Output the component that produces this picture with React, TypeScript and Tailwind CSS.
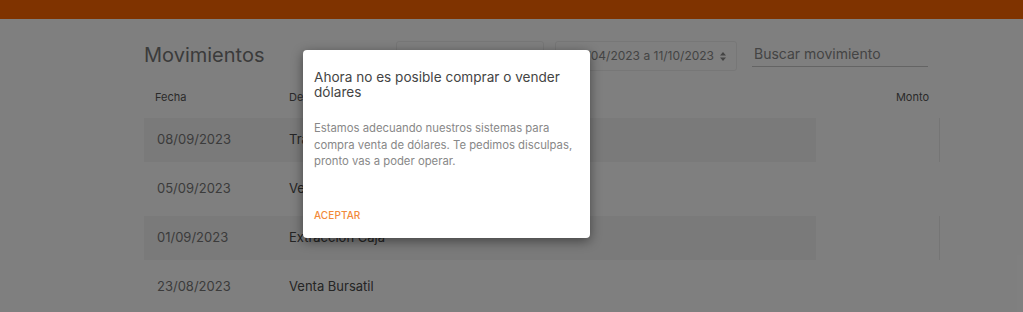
const rows = [
  { date: '08/09/2023', desc: 'Transferencia', striped: true },
  { date: '05/09/2023', desc: 'Venta Bursatil', striped: false },
  { date: '01/09/2023', desc: 'Extracción Caja', striped: true },
  { date: '23/08/2023', desc: 'Venta Bursatil', striped: false },
]

function UpDownIcon() {
  return (
    <svg className="h-[9px] w-[6px]" viewBox="0 0 6 9" fill="currentColor">
      <path d="M3 0L6 3.5H0z" />
      <path d="M3 9L0 5.5h6z" />
    </svg>
  )
}

export default function App() {
  return (
    <div className="relative h-[312px] w-[1023px] overflow-hidden bg-white font-['Inter',sans-serif]">
      <div className="h-[19px] bg-[#ff6600]" />

      <div className="ml-[144px] w-[796px]">
        <div className="mt-[22px] flex h-[30px] items-center">
          <h1 className="-mt-[2px] text-[20px] leading-none text-[#777]">Movimientos</h1>
          <div className="ml-auto flex items-center">
            <div className="h-[30px] w-[148px] rounded-[3px] border border-[#eee]" />
            <div className="ml-[11px] flex h-[30px] w-[182px] items-center justify-end gap-[6px] rounded-[3px] border border-[#eee] pr-[10px] text-[12px] text-[#888]">
              <span>10/04/2023 a 11/10/2023</span>
              <UpDownIcon />
            </div>
            <div className="ml-[15px] mr-[12px] flex h-[26px] w-[176px] items-center self-start border-b border-[#c8c8c8] pl-[2px] text-[14px] text-[#888]">
              Buscar movimiento
            </div>
          </div>
        </div>

        <div className="mt-[18px] flex h-[16px] items-center text-[11px] text-[#555]">
          <span className="w-[145px] pl-[11px]">Fecha</span>
          <span>Descripción</span>
          <span className="ml-auto pr-[11px]">Monto</span>
        </div>

        <div className="mt-[13px] flex flex-col gap-[5px]">
          {rows.map((r) => (
            <div key={r.date} className="flex h-[44px]">
              <div
                className={`flex w-[672px] items-center text-[13px] ${r.striped ? 'bg-[#f4f4f4]' : ''}`}
              >
                <span className="w-[145px] pl-[13px] text-[#777]">{r.date}</span>
                <span className="text-[#4a4a4a]">{r.desc}</span>
              </div>
              <div className={`flex-1 ${r.striped ? 'border-r border-[#eaeaea]' : ''}`} />
            </div>
          ))}
        </div>
      </div>

      <div className="absolute inset-0 bg-black/50" />

      <div className="absolute left-[303px] top-[50px] flex h-[188px] w-[287px] flex-col rounded-[4px] bg-white px-[11px] pt-[20px] shadow-[0_3px_12px_rgba(0,0,0,0.45)]">
        <h2 className="text-[13.6px] leading-[15px] text-[#444]">
          Ahora no es posible comprar o vender dólares
        </h2>
        <p className="mt-[20px] text-[11.3px] leading-[16.5px] text-[#888]">
          Estamos adecuando nuestros sistemas para compra venta de dólares. Te pedimos disculpas,
          pronto vas a poder operar.
        </p>
        <button
          type="button"
          className="mt-auto mb-[15px] self-start text-[10px] font-medium tracking-[0.1px] text-[#f28a3a]"
        >
          ACEPTAR
        </button>
      </div>
    </div>
  )
}
